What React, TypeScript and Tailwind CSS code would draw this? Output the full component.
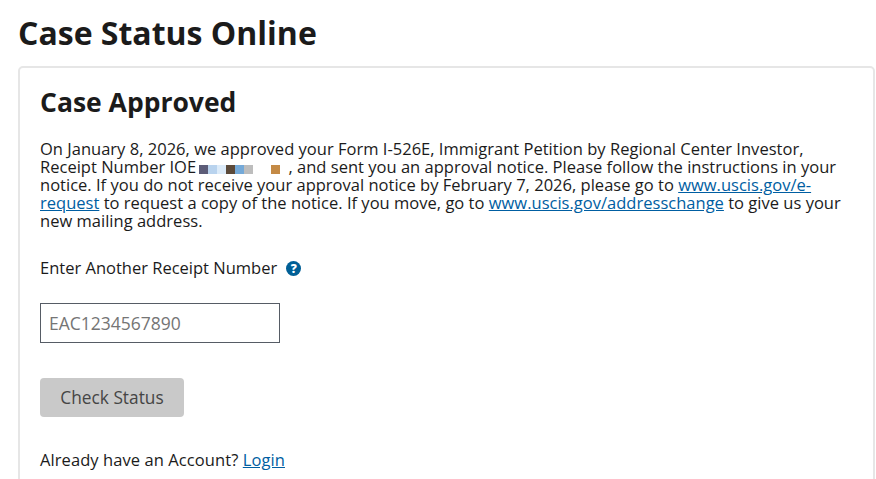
const blurCells = [
  "bg-[#5c5c78]", "bg-[#b9d3ee]", "bg-[#dcebf9]", "bg-[#5c4a3a]", "bg-[#74a9d8]", "bg-[#bdbdbd]",
  "bg-white", "bg-white", "bg-[#c48a45]",
];

export default function App() {
  return (
    <div className="h-[479px] w-[876px] overflow-hidden bg-white text-[#1b1b1b] font-['Open_Sans','Noto_Sans',sans-serif]">
      <div className="pl-[18px] pr-px pt-[10px]">
        <h1 className="text-[32px] leading-[46px] font-bold">Case Status Online</h1>
        <div className="mt-[10px] h-[500px] rounded-[5px] border-2 border-[#e6e6e6] px-5 pt-[15px]">
          <h2 className="text-[26.5px] leading-[38px] font-bold">Case Approved</h2>
          <p className="mt-[19px] w-[805px] text-[16.5px] leading-[18px] tracking-[0.015px]">
            On January 8, 2026, we approved your Form I-526E, Immigrant Petition by Regional Center Investor,
            Receipt Number IOE
            <span className="mr-[4px] ml-[3px] inline-flex align-[-1px]">
              {blurCells.map((c, i) => (
                <span key={i} className={`h-[9px] w-[9px] ${c}`} />
              ))}
            </span>
            {" "}, and sent you an approval notice. Please follow the instructions in your notice. If you do not receive your approval notice by February 7, 2026, please go to{" "}
            <a className="text-[#005ea2] underline" href="#">www.uscis.gov/e-request</a> to request a copy of the notice. If you move, go to{" "}
            <a className="text-[#005ea2] underline" href="#">www.uscis.gov/addresschange</a> to give us your new mailing address.
          </p>
          <div className="mt-[28px] flex items-center gap-[9px] text-[16.5px] leading-[20px]">
            <span>Enter Another Receipt Number</span>
            <span className="mt-px flex h-[15px] w-[15px] items-center justify-center rounded-full bg-[#005f96] text-[12px] leading-none font-extrabold text-white">?</span>
          </div>
          <input
            className="mt-[25px] block h-10 w-[240px] border border-[#565c65] px-2 text-[17.5px] placeholder:text-[#757575]"
            placeholder="EAC1234567890"
          />
          <button className="mt-[35px] block h-[39px] w-[144px] rounded-[4px] bg-[#c9c9c9] text-[17.3px] text-[#454545]">Check Status</button>
          <p className="mt-[33px] text-[16.5px] leading-[20px] tracking-[0.08px]">
            Already have an Account? <a className="text-[#005ea2] underline" href="#">Login</a>
          </p>
        </div>
      </div>
    </div>
  );
}
